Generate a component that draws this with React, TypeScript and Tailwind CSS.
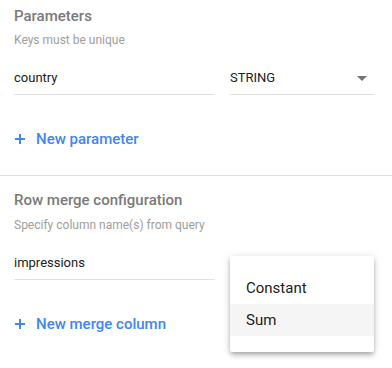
import React from "react";

function Plus() {
  return (
    <svg width="12" height="12" viewBox="0 0 12 12" className="shrink-0">
      <path d="M6 1v10M1 6h10" stroke="#4285f4" strokeWidth="2" fill="none" />
    </svg>
  );
}

export default function App() {
  return (
    <div
      className="relative w-[392px] h-[368px] bg-white overflow-hidden"
      style={{ fontFamily: "Roboto, 'Liberation Sans', sans-serif" }}
    >
      <div className="px-[14px]">
        <div className="mt-[4px] text-[15px] leading-[24px] font-medium text-[#7a7a7a]">Parameters</div>
        <div className="mt-[4px] text-[12px] leading-[16px] text-[#9e9e9e]">Keys must be unique</div>
        <div className="mt-[20px] flex gap-[16px]">
          <div className="w-[200px] border-b border-[#e0e0e0] pb-[6px] text-[13px] leading-[20px] text-[#212121]">country</div>
          <div className="w-[144px] border-b border-[#e0e0e0] pb-[6px] text-[13px] leading-[20px] text-[#212121] flex items-center justify-between pr-[7px]">
            <span>STRING</span>
            <svg width="10" height="5" viewBox="0 0 10 5">
              <path d="M0 0h10L5 5z" fill="#757575" />
            </svg>
          </div>
        </div>
        <div className="mt-[20px] h-[48px] flex items-center gap-[10px]">
          <Plus />
          <span className="text-[15px] font-medium text-[#4285f4]">New parameter</span>
        </div>
      </div>
      <div className="mt-[12px] border-t border-[#e0e0e0]" />
      <div className="px-[14px]">
        <div className="mt-[12px] text-[15px] leading-[24px] font-medium text-[#7a7a7a]">Row merge configuration</div>
        <div className="mt-[5px] text-[12px] leading-[16px] text-[#9e9e9e]">Specify column name(s) from query</div>
        <div className="mt-[20px] flex gap-[16px]">
          <div className="w-[200px] border-b border-[#e0e0e0] pb-[6px] text-[13px] leading-[20px] text-[#212121]">impressions</div>
        </div>
        <div className="mt-[20px] h-[48px] flex items-center gap-[10px]">
          <Plus />
          <span className="text-[15px] font-medium text-[#4285f4]">New merge column</span>
        </div>
      </div>
      <div className="absolute left-[230px] top-[256px] w-[144px] py-[16px] bg-white rounded-[2px] shadow-[0_2px_4px_-1px_rgba(0,0,0,0.2),0_4px_5px_0_rgba(0,0,0,0.14),0_1px_10px_0_rgba(0,0,0,0.12)]">
        <div className="h-[32px] flex items-center pl-[16px] text-[15px] text-[#212121]">Constant</div>
        <div className="h-[32px] flex items-center pl-[16px] text-[15px] text-[#212121] bg-[#f5f5f5]">Sum</div>
      </div>
    </div>
  );
}
